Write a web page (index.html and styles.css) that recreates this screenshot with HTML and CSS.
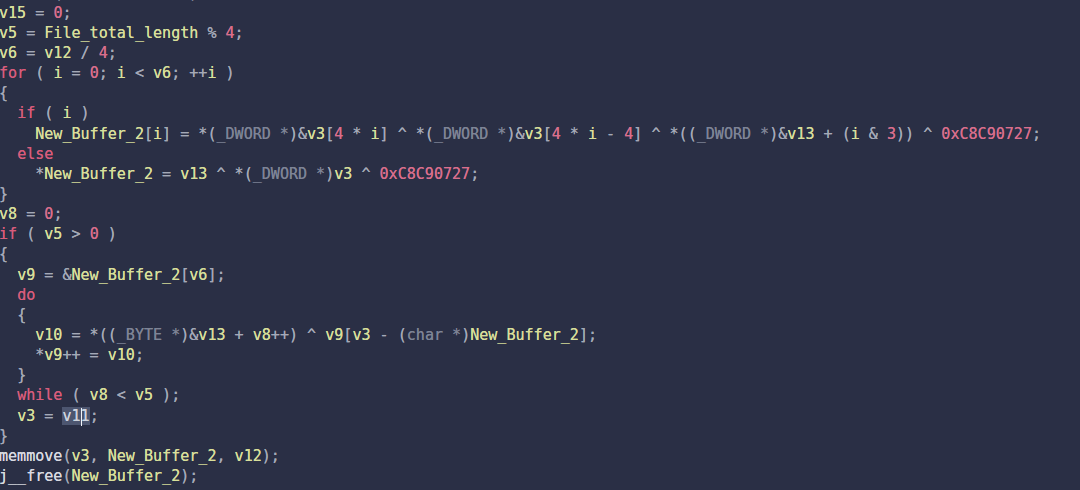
FILE: index.html
```html
<!DOCTYPE html>
<html>
<head>
<meta charset="utf-8">
<link rel="stylesheet" href="styles.css">
</head>
<body>
<div class="view">
<div class="code">
<div class="ln"><span class="f">memset</span><span class="o">(&amp;</span><span class="v">v13</span><span class="o">, </span><span class="n">0</span><span class="o">, </span><span class="n">0x10u</span><span class="o">);</span></div>
<div class="ln"><span class="v">v15</span><span class="o"> = </span><span class="n">0</span><span class="o">;</span></div>
<div class="ln"><span class="v">v5</span><span class="o"> = </span><span class="v">File_total_length</span><span class="o"> % </span><span class="n">4</span><span class="o">;</span></div>
<div class="ln"><span class="v">v6</span><span class="o"> = </span><span class="v">v12</span><span class="o"> / </span><span class="n">4</span><span class="o">;</span></div>
<div class="ln"><span class="k">for</span><span class="o"> ( </span><span class="v">i</span><span class="o"> = </span><span class="n">0</span><span class="o">; </span><span class="v">i</span><span class="o"> &lt; </span><span class="v">v6</span><span class="o">; ++</span><span class="v">i</span><span class="o"> )</span></div>
<div class="ln"><span class="o">{</span></div>
<div class="ln">  <span class="k">if</span><span class="o"> ( </span><span class="v">i</span><span class="o"> )</span></div>
<div class="ln">    <span class="v">New_Buffer_2</span><span class="o">[</span><span class="v">i</span><span class="o">] = *(</span><span class="t">_DWORD *</span><span class="o">)&amp;</span><span class="v">v3</span><span class="o">[</span><span class="n">4</span><span class="o"> * </span><span class="v">i</span><span class="o">] ^ *(</span><span class="t">_DWORD *</span><span class="o">)&amp;</span><span class="v">v3</span><span class="o">[</span><span class="n">4</span><span class="o"> * </span><span class="v">i</span><span class="o"> - </span><span class="n">4</span><span class="o">] ^ *((</span><span class="t">_DWORD *</span><span class="o">)&amp;</span><span class="v">v13</span><span class="o"> + (</span><span class="v">i</span><span class="o"> &amp; </span><span class="n">3</span><span class="o">)) ^ </span><span class="n">0xC8C90727</span><span class="o">;</span></div>
<div class="ln">  <span class="k">else</span></div>
<div class="ln">    <span class="o">*</span><span class="v">New_Buffer_2</span><span class="o"> = </span><span class="v">v13</span><span class="o"> ^ *(</span><span class="t">_DWORD *</span><span class="o">)</span><span class="v">v3</span><span class="o"> ^ </span><span class="n">0xC8C90727</span><span class="o">;</span></div>
<div class="ln"><span class="o">}</span></div>
<div class="ln"><span class="v">v8</span><span class="o"> = </span><span class="n">0</span><span class="o">;</span></div>
<div class="ln"><span class="k">if</span><span class="o"> ( </span><span class="v">v5</span><span class="o"> &gt; </span><span class="n">0</span><span class="o"> )</span></div>
<div class="ln"><span class="o">{</span></div>
<div class="ln">  <span class="v">v9</span><span class="o"> = &amp;</span><span class="v">New_Buffer_2</span><span class="o">[</span><span class="v">v6</span><span class="o">];</span></div>
<div class="ln">  <span class="k">do</span></div>
<div class="ln">  <span class="o">{</span></div>
<div class="ln">    <span class="v">v10</span><span class="o"> = *((</span><span class="t">_BYTE *</span><span class="o">)&amp;</span><span class="v">v13</span><span class="o"> + </span><span class="v">v8</span><span class="o">++) ^ </span><span class="v">v9</span><span class="o">[</span><span class="v">v3</span><span class="o"> - (</span><span class="t">char *</span><span class="o">)</span><span class="v">New_Buffer_2</span><span class="o">];</span></div>
<div class="ln">    <span class="o">*</span><span class="v">v9</span><span class="o">++ = </span><span class="v">v10</span><span class="o">;</span></div>
<div class="ln">  <span class="o">}</span></div>
<div class="ln">  <span class="k">while</span><span class="o"> ( </span><span class="v">v8</span><span class="o"> &lt; </span><span class="v">v5</span><span class="o"> );</span></div>
<div class="ln">  <span class="v">v3</span><span class="o"> = </span><span class="sel">v1<span class="caret"></span>1</span><span class="o">;</span></div>
<div class="ln"><span class="o">}</span></div>
<div class="ln"><span class="f">memmove</span><span class="o">(</span><span class="v">v3</span><span class="o">, </span><span class="v">New_Buffer_2</span><span class="o">, </span><span class="v">v12</span><span class="o">);</span></div>
<div class="ln"><span class="f">j__free</span><span class="o">(</span><span class="v">New_Buffer_2</span><span class="o">);</span></div>
</div>
</div>
</body>
</html>
```
FILE: styles.css
```css
html, body {
  margin: 0;
  padding: 0;
  background: #2a2f45;
}
.view {
  width: 1080px;
  height: 490px;
  overflow: hidden;
  background: #2a2f45;
}
.code {
  margin: -17.4px 0 0 -1px;
  font-family: "DejaVu Sans Mono", "Liberation Mono", monospace;
  font-size: 15.06px;
  line-height: 20.15px;
  color: #a4a9b7;
  text-shadow: 0 0 0.6px currentColor;
}
.ln {
  white-space: pre;
  height: 20.15px;
}
.v { color: #d8df9a; }
.k { color: #d85c7b; }
.n { color: #d96e8c; }
.o { color: #a4a9b7; }
.t { color: #7e8496; }
.f { color: #d8dae1; }
.sel {
  position: relative;
  background: #4d5670;
  color: #cdd3de;
}
.caret {
  position: absolute;
  top: 1px;
  width: 1px;
  height: 18px;
  background: #f2f4f8;
}
```
